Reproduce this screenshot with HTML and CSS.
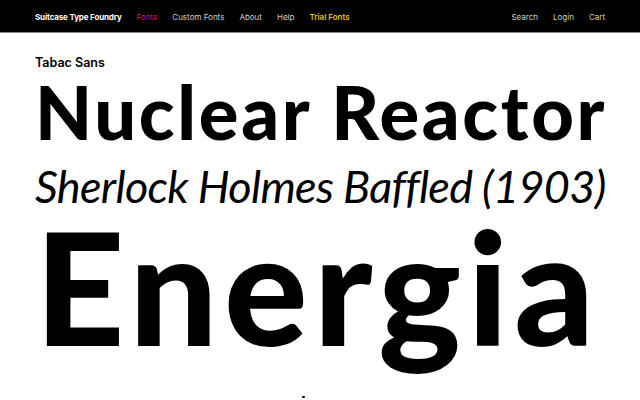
FILE: index.html
```html
<!DOCTYPE html>
<html>
<head>
<meta charset="utf-8">
<link rel="stylesheet" href="styles.css">
</head>
<body>
<header class="nav">
  <div class="nav-left">
    <a class="brand">Suitcase Type Foundry</a>
    <a class="link active">Fonts</a>
    <a class="link">Custom Fonts</a>
    <a class="link">About</a>
    <a class="link">Help</a>
    <a class="link trial">Trial Fonts</a>
  </div>
  <div class="nav-right">
    <a class="link">Search</a>
    <a class="link">Login</a>
    <a class="link">Cart</a>
  </div>
</header>
<main class="main">
  <div class="family">Tabac Sans</div>
  <div class="sample s1">Nuclear Reactor</div>
  <div class="sample s2">Sherlock Holmes Baffled (1903)</div>
  <div class="sample s3">Energia</div>
  <div class="next"><span class="dot"></span></div>
</main>
</body>
</html>
```
FILE: styles.css
```css
html, body { margin: 0; padding: 0; background: #fff; overflow: hidden; }
body { width: 640px; height: 400px; font-family: "Inter", "Liberation Sans", sans-serif; color: #000; }
.nav {
  background: #000;
  border-bottom: 1px solid #8a8a8a;
  display: flex;
  align-items: center;
  justify-content: space-between;
  padding: 1px 35px 0 35px;
  font-size: 8px;
  box-sizing: border-box;
  height: 33px;
}
.nav-left { display: flex; align-items: center; gap: 15px; }
.nav-right { display: flex; align-items: center; gap: 15px; }
.nav a { color: #d0d0d0; text-decoration: none; }
.nav .brand { color: #fff; font-weight: 700; letter-spacing: -0.15px; }
.nav .active { color: #d6187a; }
.nav .trial { color: #e8c21a; font-weight: 600; }
.main { padding: 0 35px; }
.family { font-size: 12.5px; font-weight: 600; margin-top: 22px; line-height: 16px; }
.sample { font-family: "Lato", "Liberation Sans", sans-serif; white-space: nowrap; }
.s1 { font-size: 74px; font-weight: 900; line-height: 80px; margin-top: 1px; letter-spacing: 2.7px; }
.s2 { font-size: 45px; font-style: italic; font-weight: 400; line-height: 48px; margin-top: 10px; letter-spacing: -0.7px; }
.s3 { font-size: 156px; font-weight: 900; line-height: 160px; margin-top: -4px; letter-spacing: 6.2px; }
.next { height: 32px; }
.dot { display: block; width: 3px; height: 2px; background: #000; margin-left: 267px; margin-top: 30px; border-radius: 1px; }
```
